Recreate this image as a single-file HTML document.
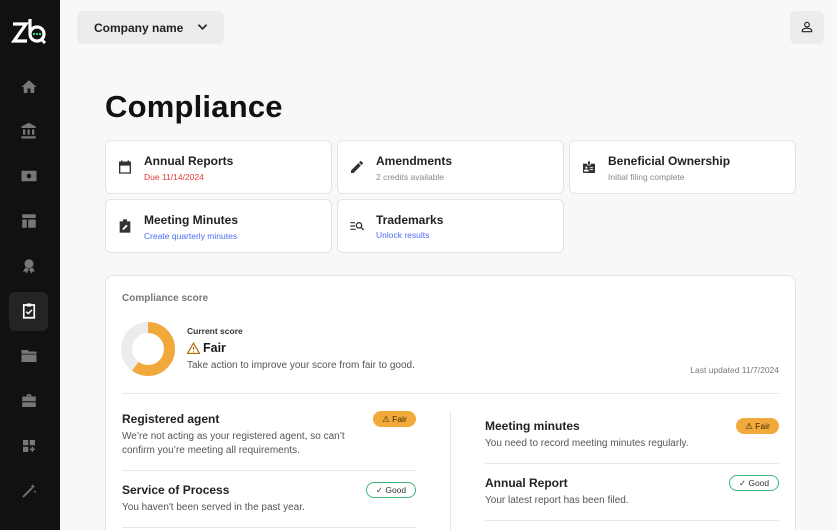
<!DOCTYPE html>
<html><head><style>
*{margin:0;padding:0;box-sizing:border-box}
html,body{width:837px;height:530px;overflow:hidden}
body{background:#f8f8f8;font-family:"Liberation Sans",sans-serif;color:#1a1a1a;position:relative}
.sb{position:absolute;left:0;top:0;width:60px;height:530px;background:#111}
.ic{position:absolute;left:20px;width:18px;height:18px}
.abs{position:absolute}
.card{position:absolute;background:#fff;border:1px solid #e4e4e4;border-radius:6px;width:227px;height:54px}
.card .t{position:absolute;left:38px;top:13px;font-size:12px;font-weight:bold;color:#222}
.card .s{position:absolute;left:38px;top:31px;font-size:8.5px;color:#888}
.card svg{position:absolute;left:11px;top:18px}
.h{font-size:12px;font-weight:bold;color:#222}
.d{font-size:10px;color:#555;line-height:14px}
.hr{position:absolute;height:1px;background:#e6e6e6}
.fair{position:absolute;background:#f2a93b;border-radius:9px;height:16px;font-size:8.5px;color:#3a2a00;padding:3px 0 0 0;text-align:center}
.good{position:absolute;border:1.3px solid #3fb37a;border-radius:9px;height:16px;font-size:8.5px;color:#333;padding:2px 0 0 0;text-align:center;background:#fff}
</style></head><body>
<div class="sb">
  <svg class="abs" style="left:11px;top:18px" width="36" height="28" viewBox="0 0 36 28">
    <path d="M2 6h13L3 23h13" fill="none" stroke="#fff" stroke-width="3.2" stroke-linejoin="miter"/>
    <path d="M19 1v14" stroke="#fff" stroke-width="3.2"/>
    <circle cx="26" cy="16" r="7" fill="none" stroke="#fff" stroke-width="3.2"/>
    <path d="M30 21l4 4" stroke="#fff" stroke-width="3"/>
    <rect x="22" y="15" width="2" height="2" fill="#3ddc84"/><rect x="25" y="15" width="2" height="2" fill="#3ddc84"/><rect x="28" y="15" width="2" height="2" fill="#3ddc84"/>
  </svg>
  <svg class="ic" style="top:78px" viewBox="0 0 24 24"><path d="M10 20v-6h4v6h5v-8h3L12 3 2 12h3v8z" fill="#777"/></svg>
  <svg class="ic" style="top:122px" viewBox="0 0 24 24"><path d="M4 10v7h3v-7H4zm6 0v7h3v-7h-3zM2 22h19v-3H2v3zm14-12v7h3v-7h-3zM11.5 1L2 6v2h19V6l-9.5-5z" fill="#777"/></svg>
  <svg class="ic" style="top:167px" viewBox="0 0 24 24"><path d="M2 5h20v14H2z" fill="#777"/><circle cx="12" cy="12" r="3" fill="#111"/></svg>
  <svg class="ic" style="top:212px" viewBox="0 0 24 24"><path d="M3 3h18v5H3zM3 10h6v11H3zM11 10h10v11H11z" fill="#777"/></svg>
  <svg class="ic" style="top:257px" viewBox="0 0 24 24"><circle cx="12" cy="9" r="6" fill="#777"/><path d="M7 14l-3 6 3-1 2 3 3-6zM17 14l3 6-3-1-2 3-3-6z" fill="#777"/></svg>
  <div class="abs" style="left:9px;top:292px;width:39px;height:39px;background:#242424;border-radius:6px"></div>
  <svg class="ic" style="top:302px" viewBox="0 0 24 24"><path d="M5 4h14v17H5z" fill="none" stroke="#fff" stroke-width="2.2"/><path d="M9 2h6v4H9z" fill="#fff"/><path d="M8.5 13l2.5 2.5 5-5" fill="none" stroke="#fff" stroke-width="2"/></svg>
  <svg class="ic" style="top:347px" viewBox="0 0 24 24"><path d="M2 4h8l2 2h10v3H2zM2 10h20v10H2z" fill="#777"/></svg>
  <svg class="ic" style="top:392px" viewBox="0 0 24 24"><path d="M9 3h6v3h6v14H3V6h6zM11 5v1h2V5z" fill="#777"/><path d="M3 13h18" stroke="#111" stroke-width="1.5"/></svg>
  <svg class="ic" style="top:437px" viewBox="0 0 24 24"><path d="M4 4h7v7H4zM13 4h7v7h-7zM4 13h7v7H4z" fill="#777"/><path d="M16.5 13v7M13 16.5h7" stroke="#777" stroke-width="2"/></svg>
  <svg class="ic" style="top:482px" viewBox="0 0 24 24"><path d="M4 20L16 8" stroke="#777" stroke-width="2.5"/><path d="M17 3l1 2 2 1-2 1-1 2-1-2-2-1 2-1zM20 11l.6 1.4 1.4.6-1.4.6-.6 1.4-.6-1.4-1.4-.6 1.4-.6z" fill="#777"/></svg>
</div>

<div class="abs" style="left:77px;top:11px;width:147px;height:33px;background:#ececec;border-radius:6px">
  <span class="abs" style="left:17px;top:10px;font-size:12px;font-weight:bold;color:#222">Company name</span>
  <svg class="abs" style="left:120px;top:12px" width="11" height="8" viewBox="0 0 12 8"><path d="M1.5 1.5L6 6l4.5-4.5" fill="none" stroke="#222" stroke-width="1.8"/></svg>
</div>
<div class="abs" style="left:790px;top:11px;width:34px;height:33px;background:#ececec;border-radius:6px">
  <svg class="abs" style="left:10px;top:9px" width="14" height="14" viewBox="0 0 24 24"><circle cx="12" cy="8" r="4" fill="none" stroke="#222" stroke-width="2"/><path d="M4 20v-2c0-2 4-4 8-4s8 2 8 4v2z" fill="none" stroke="#222" stroke-width="2"/></svg>
</div>

<div class="abs" style="left:105px;top:89px;font-size:31px;font-weight:bold;color:#111;letter-spacing:0.2px">Compliance</div>

<div class="card" style="left:105px;top:140px"><svg width="16" height="16" viewBox="0 0 24 24"><path d="M4 5h16v16H4z" fill="none" stroke="#333" stroke-width="2"/><path d="M4 5h16v4H4zM7 2v4M17 2v4" fill="#333" stroke="#333" stroke-width="2"/></svg><div class="t">Annual Reports</div><div class="s" style="color:#e53935">Due 11/14/2024</div></div>
<div class="card" style="left:337px;top:140px"><svg width="16" height="16" viewBox="0 0 24 24"><path d="M3 17.2V21h3.8L17.8 10 14 6.2zM20.7 7.1c.4-.4.4-1 0-1.4l-2.4-2.4c-.4-.4-1-.4-1.4 0L15 5.2 18.8 9z" fill="#333"/></svg><div class="t">Amendments</div><div class="s">2 credits available</div></div>
<div class="card" style="left:569px;top:140px"><svg width="16" height="16" viewBox="0 0 24 24"><path d="M3 7h18v14H3z" fill="#333"/><path d="M10 3h4v6h-4z" fill="#333" stroke="#fff" stroke-width="1"/><circle cx="8" cy="13" r="1.6" fill="#fff"/><path d="M5 18c0-2 6-2 6 0zM13 13h5M13 16h5" stroke="#fff" stroke-width="1.4" fill="#fff"/></svg><div class="t">Beneficial Ownership</div><div class="s">Initial filing complete</div></div>
<div class="card" style="left:105px;top:199px"><svg width="16" height="16" viewBox="0 0 24 24"><path d="M4 5h16v17H4z" fill="#333"/><path d="M9 2h6v4H9z" fill="#333"/><path d="M8 18l1-3 5-5 2 2-5 5z" fill="#fff"/></svg><div class="t">Meeting Minutes</div><div class="s" style="color:#4a6cf7">Create quarterly minutes</div></div>
<div class="card" style="left:337px;top:199px"><svg width="16" height="16" viewBox="0 0 24 24"><path d="M2 7h7M2 12h7M2 17h8" stroke="#333" stroke-width="1.8"/><circle cx="15" cy="11" r="4" fill="none" stroke="#333" stroke-width="2"/><path d="M18 14l4 4" stroke="#333" stroke-width="2"/></svg><div class="t">Trademarks</div><div class="s" style="color:#4a6cf7;top:30px">Unlock results</div></div>

<div class="abs" style="left:105px;top:275px;width:691px;height:265px;background:#fff;border:1px solid #e4e4e4;border-radius:8px"></div>
<div class="abs" style="left:122px;top:293px;font-size:10px;color:#777;font-weight:bold">Compliance score</div>
<svg class="abs" style="left:121px;top:322px" width="54" height="54" viewBox="0 0 54 54"><circle cx="27" cy="27" r="21.5" fill="none" stroke="#ececec" stroke-width="11"/><circle cx="27" cy="27" r="21.5" fill="none" stroke="#f2a93b" stroke-width="11" stroke-dasharray="81 200" transform="rotate(-90 27 27)"/></svg>
<div class="abs" style="left:187px;top:326px;font-size:8.5px;color:#333;font-weight:bold">Current score</div>
<svg class="abs" style="left:187px;top:342px" width="13" height="12" viewBox="0 0 24 22"><path d="M12 2L1 21h22z" fill="none" stroke="#b26a00" stroke-width="2.2"/><path d="M12 9v6M12 17v2" stroke="#b26a00" stroke-width="2"/></svg>
<div class="abs" style="left:203px;top:341px;font-size:12.5px;font-weight:bold">Fair</div>
<div class="abs d" style="left:187px;top:359px">Take action to improve your score from fair to good.</div>
<div class="abs" style="left:684px;top:365px;width:95px;text-align:right;font-size:8.5px;color:#777">Last updated 11/7/2024</div>
<div class="hr" style="left:122px;top:393px;width:657px"></div>
<div class="abs" style="left:450px;top:412px;width:1px;height:130px;background:#e6e6e6"></div>

<div class="abs h" style="left:122px;top:412px">Registered agent</div>
<div class="fair" style="left:373px;top:411px;width:43px">⚠ Fair</div>
<div class="abs d" style="left:122px;top:430px">We’re not acting as your registered agent, so can’t<br>confirm you’re meeting all requirements.</div>
<div class="hr" style="left:122px;top:470px;width:294px"></div>
<div class="abs h" style="left:122px;top:483px">Service of Process</div>
<div class="good" style="left:366px;top:482px;width:50px">✓ Good</div>
<div class="abs d" style="left:122px;top:501px">You haven't been served in the past year.</div>
<div class="hr" style="left:122px;top:527px;width:294px"></div>

<div class="abs h" style="left:485px;top:419px">Meeting minutes</div>
<div class="fair" style="left:736px;top:418px;width:43px">⚠ Fair</div>
<div class="abs d" style="left:485px;top:437px">You need to record meeting minutes regularly.</div>
<div class="hr" style="left:485px;top:463px;width:294px"></div>
<div class="abs h" style="left:485px;top:476px">Annual Report</div>
<div class="good" style="left:729px;top:475px;width:50px">✓ Good</div>
<div class="abs d" style="left:485px;top:494px">Your latest report has been filed.</div>
<div class="hr" style="left:485px;top:520px;width:294px"></div>
</body></html>
